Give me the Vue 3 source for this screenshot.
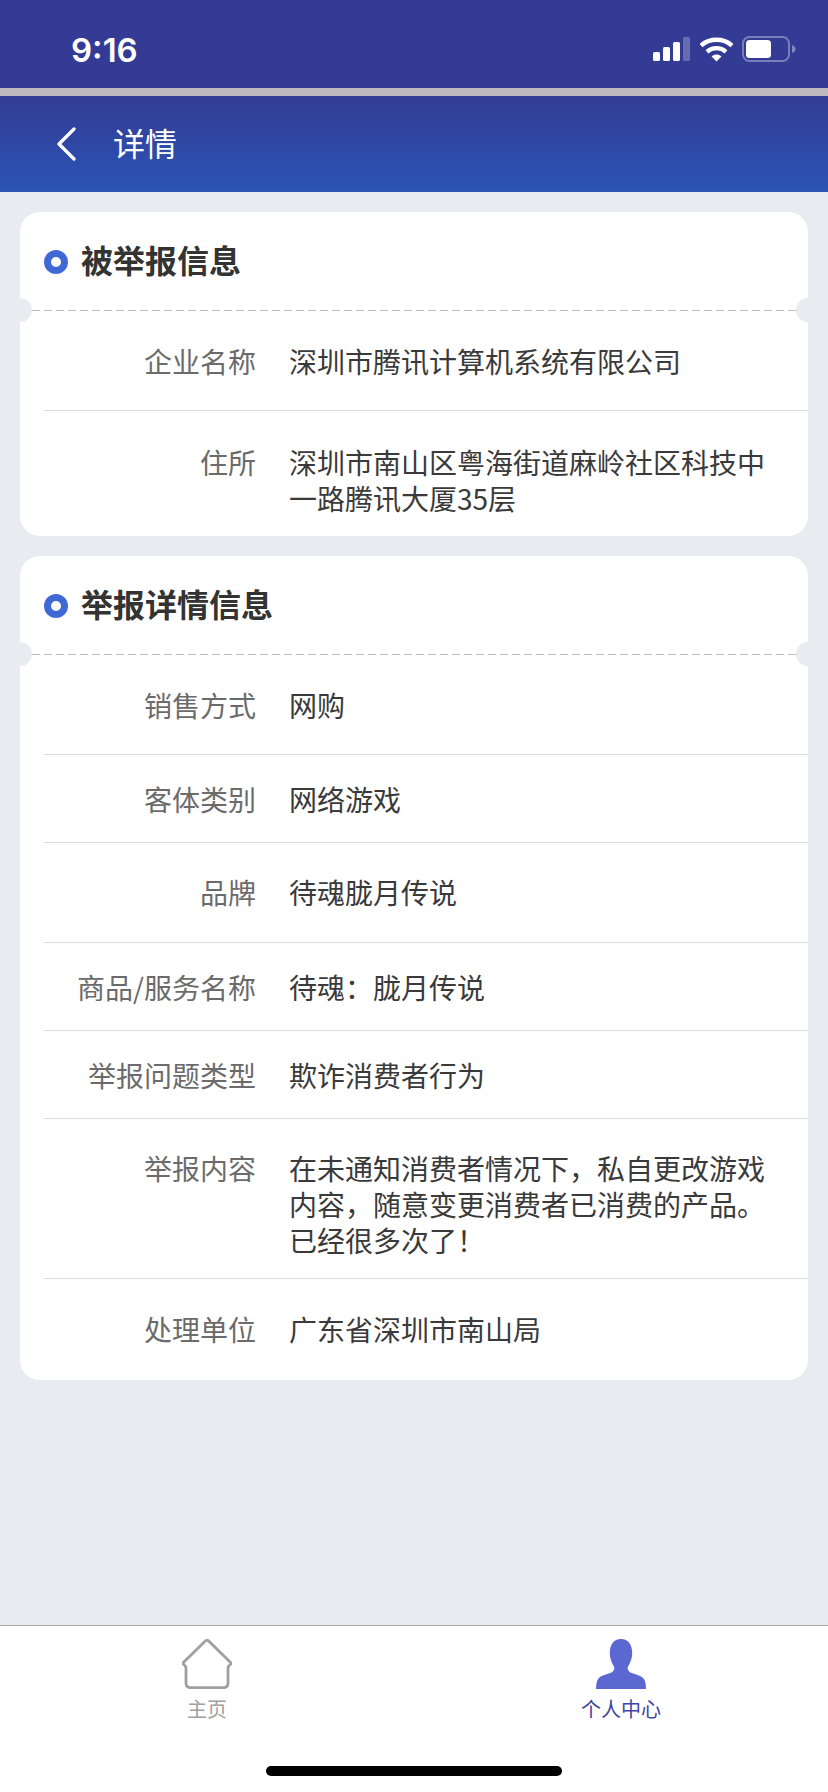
<script setup>
const cards = [
  {
    title: '被举报信息',
    rows: [
      { label: '企业名称', value: '深圳市腾讯计算机系统有限公司', top: 32, bottom: 31 },
      { label: '住所', value: '深圳市南山区粤海街道麻岭社区科技中一路腾讯大厦35层', top: 33, bottom: 20 }
    ]
  },
  {
    title: '举报详情信息',
    rows: [
      { label: '销售方式', value: '网购', top: 32, bottom: 31 },
      { label: '客体类别', value: '网络游戏', top: 26, bottom: 25 },
      { label: '品牌', value: '待魂胧月传说', top: 31, bottom: 32 },
      { label: '商品/服务名称', value: '待魂：胧月传说', top: 26, bottom: 25 },
      { label: '举报问题类型', value: '欺诈消费者行为', top: 26, bottom: 25 },
      { label: '举报内容', value: '在未通知消费者情况下，私自更改游戏内容，随意变更消费者已消费的产品。已经很多次了！', top: 31, bottom: 20 },
      { label: '处理单位', value: '广东省深圳市南山局', top: 32, bottom: 33 }
    ]
  }
];
</script>

<template>
  <div class="page">
    <div class="status">
      <span class="time">9:16</span>
      <div class="status-icons">
        <svg width="38" height="24" viewBox="0 0 38 24">
          <rect x="0" y="15" width="7" height="9" rx="1.5" fill="#fff" />
          <rect x="10" y="10" width="7" height="14" rx="1.5" fill="#fff" />
          <rect x="20" y="5" width="7" height="19" rx="1.5" fill="#fff" />
          <rect x="30" y="0" width="7" height="24" rx="1.5" fill="#fff" opacity="0.25" />
        </svg>
        <svg width="33" height="25" viewBox="0 0 33 25">
          <path d="M1 8.5C9.5 .8 23.5 .8 32 8.5" fill="none" stroke="#fff" stroke-width="4.4" />
          <path d="M7 14.8C12.5 10 20.5 10 26 14.8" fill="none" stroke="#fff" stroke-width="4.2" />
          <path d="M11.6 19.4C14.6 17 18.4 17 21.4 19.4L16.5 24.5Z" fill="#fff" />
        </svg>
        <svg width="54" height="26" viewBox="0 0 54 26">
          <rect x="1" y="1" width="46" height="24" rx="6.5" fill="none" stroke="#fff" stroke-opacity="0.35" stroke-width="2" />
          <rect x="4" y="4" width="25" height="18" rx="3.5" fill="#fff" />
          <path d="M50 9C52.5 10 53.5 11.5 53.5 13S52.5 16 50 17Z" fill="#fff" fill-opacity="0.4" />
        </svg>
      </div>
    </div>
    <div class="strip"></div>
    <header class="nav">
      <svg class="back" width="20" height="36" viewBox="0 0 20 36">
        <path d="M18 3L3 18L18 33" fill="none" stroke="#fff" stroke-width="3.2" stroke-linecap="round" stroke-linejoin="round" />
      </svg>
      <span class="nav-title">详情</span>
    </header>

    <main class="content">
      <section v-for="card in cards" :key="card.title" class="card">
        <div class="card-head">
          <i class="dot"></i>
          <h2>{{ card.title }}</h2>
        </div>
        <div class="dash">
          <i class="notch left"></i>
          <i class="notch right"></i>
        </div>
        <div
          v-for="row in card.rows"
          :key="row.label"
          class="row"
          :style="{ paddingTop: row.top + 'px', paddingBottom: row.bottom + 'px' }"
        >
          <span class="label">{{ row.label }}</span>
          <span class="value">{{ row.value }}</span>
        </div>
      </section>
    </main>

    <footer class="tabbar">
      <div class="tabs">
        <div class="tab">
          <svg width="50" height="50" viewBox="0 0 50 50">
            <path d="M22.8 2.4C24 1.2 26 1.2 27.2 2.4L48.6 23.4C49.2 24 49.2 24.6 48.6 25.2C47 26.4 46 27.4 46 29.4V44C46 47.4 44 48.7 41.4 48.7H8.6C6 48.7 4 47.4 4 44V29.4C4 27.4 3 26.4 1.4 25.2C.8 24.6 .8 24 1.4 23.4Z" fill="none" stroke="#a0a0a0" stroke-width="2.8" stroke-linejoin="round" />
          </svg>
          <span>主页</span>
        </div>
        <div class="tab active">
          <svg width="50" height="50" viewBox="0 0 50 50">
            <path d="M25 0C17.5 0 13.8 6 13.8 14C13.8 20 16.5 25 18 27.5C19 29.5 18 32 15.5 33.5C11 35.5 4 36 1.5 41C.5 43.5 0 47 0 50H50C50 47 49.5 43.5 48.5 41C46 36 39 35.5 34.5 33.5C32 32 31 29.5 32 27.5C33.5 25 36.2 20 36.2 14C36.2 6 32.5 0 25 0Z" fill="#5c68d2" />
          </svg>
          <span>个人中心</span>
        </div>
      </div>
      <div class="home-bar"></div>
    </footer>
  </div>
</template>

<style scoped>
.page {
  width: 828px;
  height: 1792px;
  display: flex;
  flex-direction: column;
  background: #e8ebf0;
  font-family: "Noto Sans CJK SC", "Noto Sans", sans-serif;
  overflow: hidden;
}

.status {
  height: 88px;
  flex: none;
  display: flex;
  justify-content: space-between;
  align-items: center;
  padding: 0 32px 0 71px;
  background: #333b94;
  color: #fff;
}

.time {
  font-family: Inter, sans-serif;
  font-size: 33px;
  font-weight: 600;
  line-height: 38px;
  margin-top: 12px;
}

.status-icons {
  display: flex;
  align-items: center;
  gap: 9px;
  margin-top: 10px;
}

.strip {
  height: 8px;
  flex: none;
  background: #bcb9bd;
}

.nav {
  height: 96px;
  flex: none;
  display: flex;
  align-items: center;
  padding-left: 56px;
  background: linear-gradient(#333b94, #2b55b6);
}

.nav-title {
  margin: -4px 0 0 37px;
  color: #fff;
  font-size: 32px;
  line-height: 44px;
}

.content {
  flex: 1;
  padding: 20px 20px 0;
  display: flex;
  flex-direction: column;
  gap: 20px;
}

.card {
  background: #fff;
  border-radius: 20px;
}

.card-head {
  height: 98px;
  display: flex;
  align-items: center;
  padding-left: 24px;
}

.dot {
  width: 24px;
  height: 24px;
  box-sizing: border-box;
  border: 7px solid #4067d6;
  border-radius: 50%;
  margin: 2px 13px 0 0;
}

h2 {
  margin: -4px 0 0;
  font-size: 32px;
  font-weight: 700;
  line-height: 44px;
  color: #333;
}

.dash {
  position: relative;
  height: 1px;
  background: repeating-linear-gradient(to right, #bbb 0 8px, transparent 8px 12px);
  margin: 0 12px;
}

.notch {
  position: absolute;
  top: -12px;
  width: 24px;
  height: 24px;
  border-radius: 50%;
  background: #e8ebf0;
}

.notch.left {
  left: -24px;
}

.notch.right {
  right: -24px;
}

.row {
  display: flex;
  margin-left: 24px;
  border-bottom: 1px solid #dcdcdc;
  font-size: 28px;
  line-height: 36px;
}

.row:last-child {
  border-bottom: none;
}

.label {
  flex: none;
  width: 212px;
  text-align: right;
  color: #6b6b6b;
}

.value {
  flex: none;
  width: 480px;
  margin-left: 33px;
  color: #3a3a3a;
}

.tabbar {
  height: 167px;
  flex: none;
  box-sizing: border-box;
  border-top: 1px solid #a8a8a8;
  background: #fff;
  position: relative;
}

.tabs {
  display: flex;
  padding-top: 13px;
}

.tab {
  flex: 1;
  display: flex;
  flex-direction: column;
  align-items: center;
  font-size: 20px;
  line-height: 26px;
  color: #a0a0a0;
}

.tab svg {
  margin-bottom: 7px;
}

.tab.active {
  color: #3f45a3;
}

.home-bar {
  position: absolute;
  left: 266px;
  bottom: 16px;
  width: 296px;
  height: 10px;
  border-radius: 5px;
  background: #000;
}
</style>
